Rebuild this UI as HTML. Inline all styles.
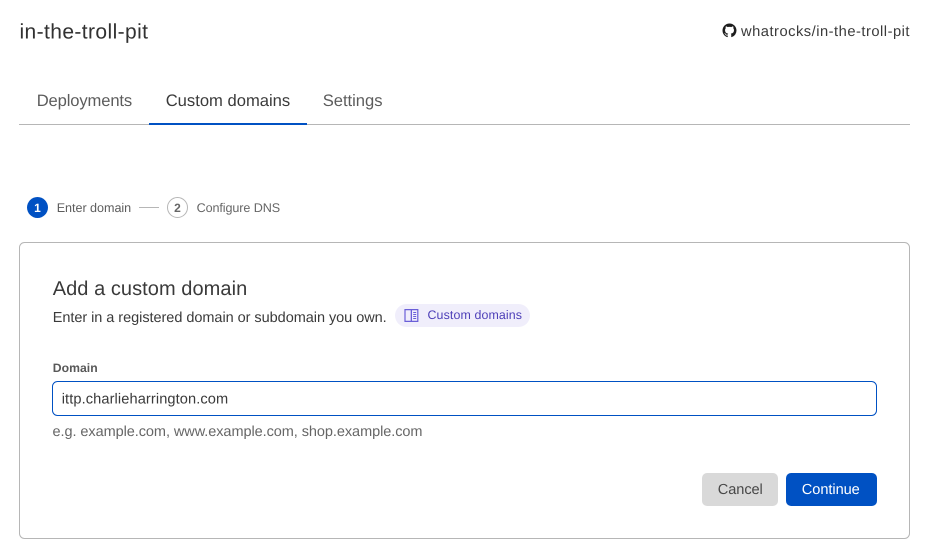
<!DOCTYPE html>
<html lang="en">
<head>
<meta charset="utf-8">
<title>Custom domains</title>
<style>
html,body{margin:0;padding:0;background:#fff;width:940px;height:559px;overflow:hidden}
svg{display:block}
text{font-family:"Liberation Sans",sans-serif;text-rendering:geometricPrecision}
</style>
</head>
<body>
<svg width="940" height="559" viewBox="0 0 940 559" xmlns="http://www.w3.org/2000/svg">
<rect width="940" height="559" fill="#fff"/>

<text x="19.5" y="38.5" font-size="21" fill="#313131" textLength="128.5" lengthAdjust="spacing">in-the-troll-pit</text>

<g transform="translate(722.5,23.5) scale(0.875)">
<path fill="#1d1d1d" fill-rule="evenodd" d="M8 0C3.58 0 0 3.58 0 8c0 3.54 2.29 6.53 5.47 7.59.4.07.55-.17.55-.38 0-.19-.01-.82-.01-1.49-2.01.37-2.53-.49-2.69-.94-.09-.23-.48-.94-.82-1.13-.28-.15-.68-.52-.01-.53.63-.01 1.08.58 1.23.82.72 1.21 1.87.87 2.33.66.07-.52.28-.87.51-1.07-1.78-.2-3.64-.89-3.64-3.95 0-.87.31-1.59.82-2.15-.08-.2-.36-1.02.08-2.12 0 0 .67-.21 2.2.82.64-.18 1.32-.27 2-.27s1.36.09 2 .27c1.53-1.04 2.2-.82 2.2-.82.44 1.1.16 1.92.08 2.12.51.56.82 1.27.82 2.15 0 3.07-1.87 3.75-3.65 3.95.29.25.54.73.54 1.48 0 1.07-.01 1.93-.01 2.2 0 .21.15.46.55.38A8.01 8.01 0 0 0 16 8c0-4.42-3.58-8-8-8z"/>
</g>
<text x="741" y="36" font-size="14.7" fill="#3a3a3a" textLength="168.5" lengthAdjust="spacing">whatrocks/in-the-troll-pit</text>

<text x="36.7" y="106" font-size="16.6" fill="#5c5c5c" textLength="95.5" lengthAdjust="spacing">Deployments</text>
<text x="165.7" y="106" font-size="16.6" fill="#3a3a3a" textLength="124.5" lengthAdjust="spacing">Custom domains</text>
<text x="322.7" y="106" font-size="16.6" fill="#5c5c5c" textLength="59.8" lengthAdjust="spacing">Settings</text>
<rect x="19" y="124" width="891" height="1" fill="#b6b6b6"/>
<rect x="149" y="123" width="158" height="2" fill="#0051c3"/>

<circle cx="37.5" cy="207.5" r="10.5" fill="#0051c3"/>
<text x="37.5" y="212" font-size="12" font-weight="700" fill="#fff" text-anchor="middle">1</text>
<text x="56.7" y="212" font-size="12.6" fill="#5c5c5c" textLength="74.5" lengthAdjust="spacing">Enter domain</text>
<rect x="139" y="207" width="20" height="1" fill="#b6b6b6"/>
<circle cx="177.5" cy="207.5" r="10" fill="#fff" stroke="#b6b6b6" stroke-width="1"/>
<text x="177.5" y="212" font-size="12" font-weight="700" fill="#666" text-anchor="middle">2</text>
<text x="196.6" y="212" font-size="12.6" fill="#666" textLength="83.5" lengthAdjust="spacing">Configure DNS</text>

<rect x="19.5" y="242.5" width="890" height="296" rx="5" ry="5" fill="#fff" stroke="#b6b6b6" stroke-width="1"/>

<text x="52.7" y="295" font-size="20" fill="#3a3a3a" textLength="194.5" lengthAdjust="spacing">Add a custom domain</text>
<text x="52.7" y="322" font-size="14.5" fill="#3a3a3a" textLength="334" lengthAdjust="spacing">Enter in a registered domain or subdomain you own.</text>

<rect x="395" y="304" width="135" height="23" rx="11.5" ry="11.5" fill="#f0eefb"/>
<g fill="none" stroke="#6a5fd8" stroke-width="1.2">
<path d="M405 309.6h6.4v11.8h-6.4z"/>
<path d="M411.4 309.6h6.4v11.8h-6.4z"/>
</g>
<g fill="none" stroke="#6a5fd8" stroke-width="1">
<path d="M413.2 312.5h3M413.2 314.5h3M413.2 316.5h3M413.2 318.5h3"/>
</g>
<text x="427.5" y="319" font-size="12.4" fill="#4d3fb8" textLength="94.5" lengthAdjust="spacing">Custom domains</text>

<text x="52.7" y="372" font-size="12.2" font-weight="700" fill="#595959" textLength="45" lengthAdjust="spacing">Domain</text>

<rect x="52.5" y="381.5" width="824" height="34" rx="5" ry="5" fill="#fff" stroke="#0051c3" stroke-width="1"/>
<text x="61.7" y="403.5" font-size="14.6" fill="#3a3a3a" textLength="166.5" lengthAdjust="spacing">ittp.charlieharrington.com</text>

<text x="52.5" y="436" font-size="14.5" fill="#666" textLength="370" lengthAdjust="spacing">e.g. example.com, www.example.com, shop.example.com</text>

<rect x="702" y="473" width="76" height="33" rx="5" ry="5" fill="#d9d9d9"/>
<text x="717.8" y="494" font-size="14.6" fill="#484848" textLength="45" lengthAdjust="spacing">Cancel</text>
<rect x="786" y="473" width="91" height="33" rx="5" ry="5" fill="#0051c3"/>
<text x="801.8" y="494" font-size="14.6" fill="#fff" textLength="58" lengthAdjust="spacing">Continue</text>
</svg>
</body>
</html>
